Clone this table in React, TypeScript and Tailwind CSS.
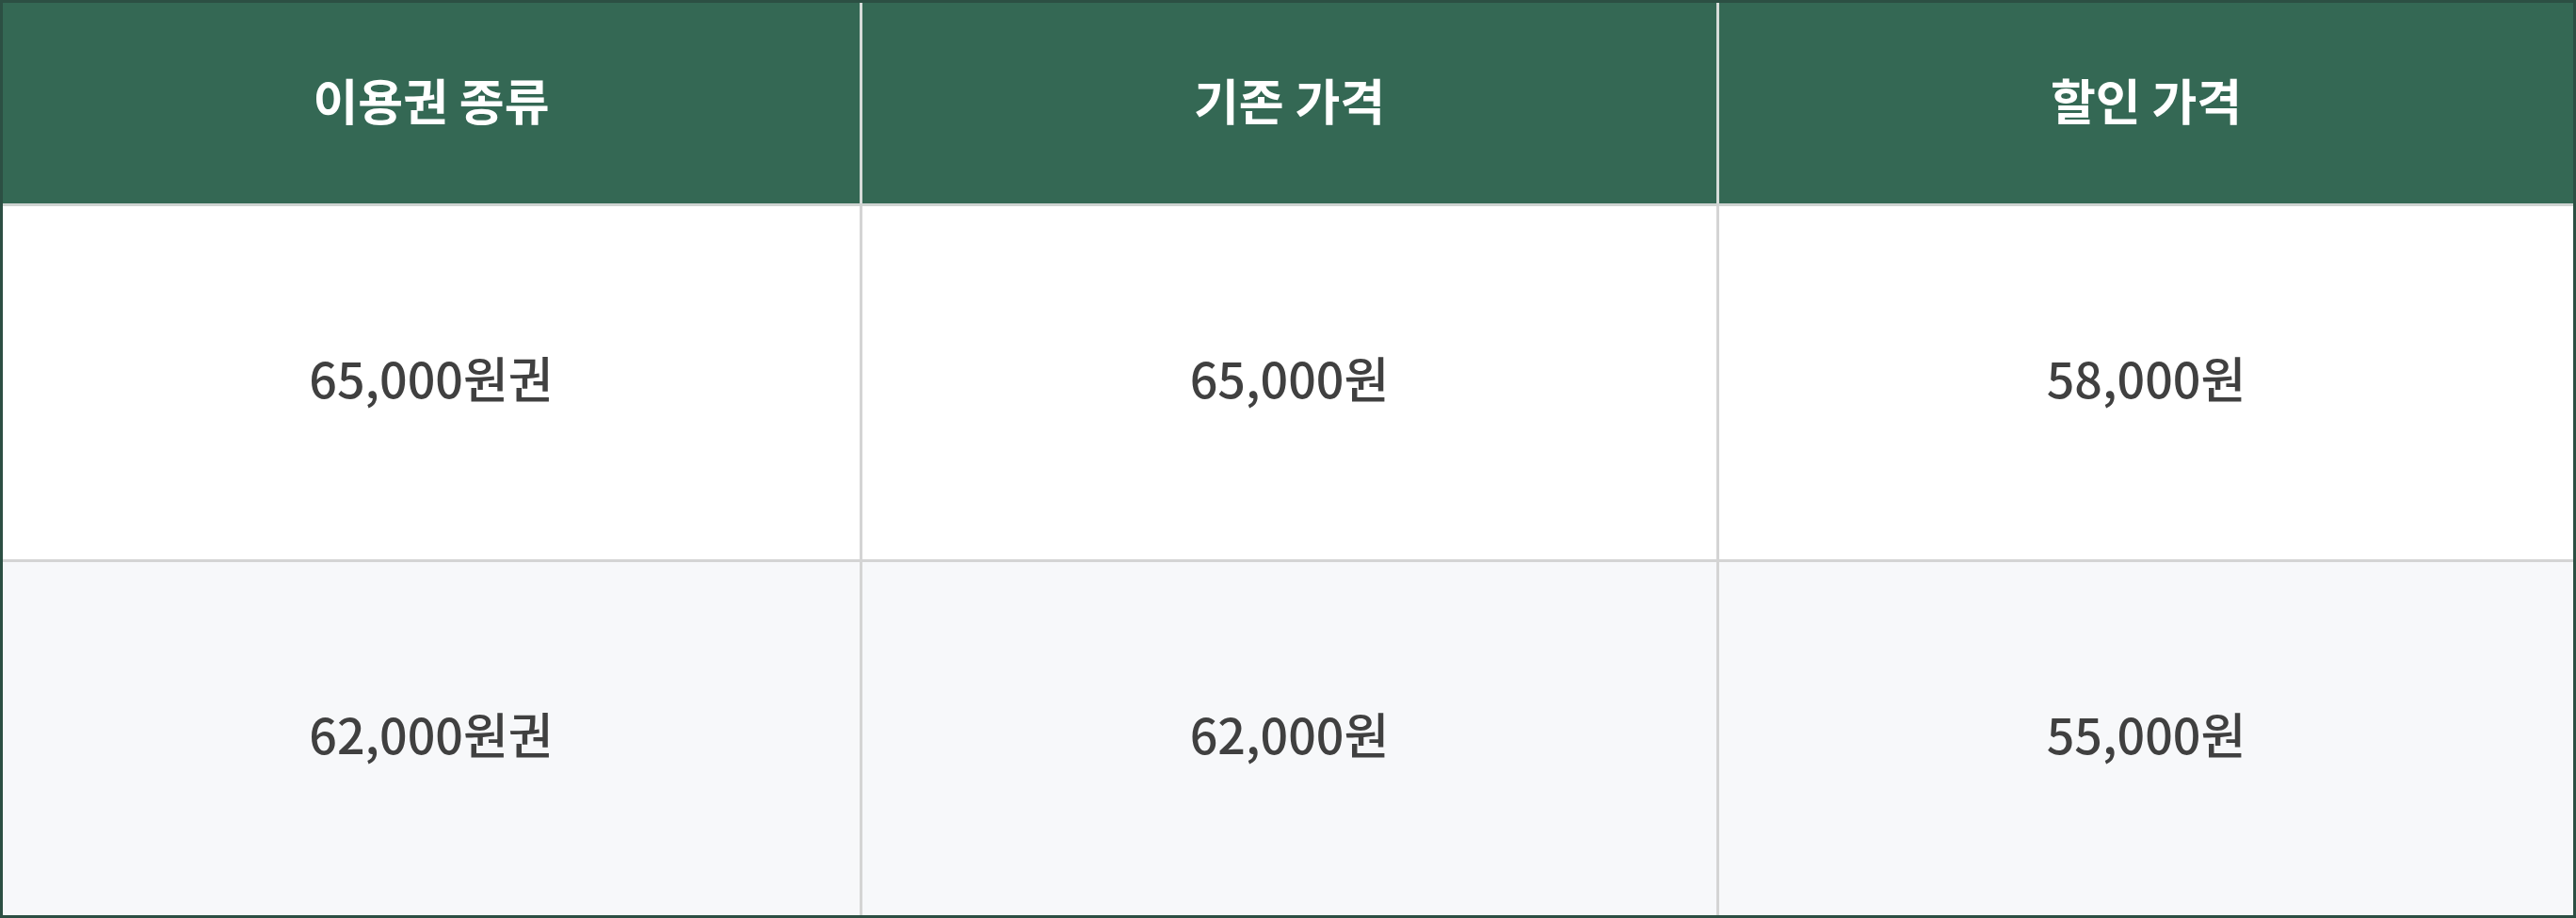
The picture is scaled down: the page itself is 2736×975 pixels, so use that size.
import React from "react"

const rows = [
  { type: "65,000원권", base: "65,000원", sale: "58,000원" },
  { type: "62,000원권", base: "62,000원", sale: "55,000원" },
]

const font = { fontFamily: '"Noto Sans CJK KR", "Noto Sans", sans-serif' }

export default function App() {
  return (
    <div className="w-[2736px] h-[975px] bg-white" style={font}>
      <div className="flex flex-col h-full border-[3px] border-[#2c4f43]">
        {/* header */}
        <div className="grid grid-cols-3 h-[216px] bg-[#346854] border-b-[3px] border-[#cfd3d1]">
          {["이용권 종류", "기존 가격", "할인 가격"].map((h, i) => (
            <div
              key={i}
              className={`flex items-center justify-center pb-2 text-[52px] font-bold text-white ${i > 0 ? "border-l-[3px] border-[#d6dcd9]" : ""}`}
            >
              {h}
            </div>
          ))}
        </div>

        {/* body */}
        {rows.map((r, ri) => (
          <div
            key={ri}
            className={`grid grid-cols-3 flex-1 ${ri === 0 ? "bg-white border-b-[3px] border-[#d4d4d4]" : "bg-[#f7f8fa]"}`}
          >
            {[r.type, r.base, r.sale].map((c, ci) => (
              <div
                key={ci}
                className={`flex items-center justify-center pb-3 text-[52px] font-medium text-[#404040] ${ci > 0 ? "border-l-[3px] border-[#d4d4d4]" : ""}`}
              >
                {c}
              </div>
            ))}
          </div>
        ))}
      </div>
    </div>
  )
}
